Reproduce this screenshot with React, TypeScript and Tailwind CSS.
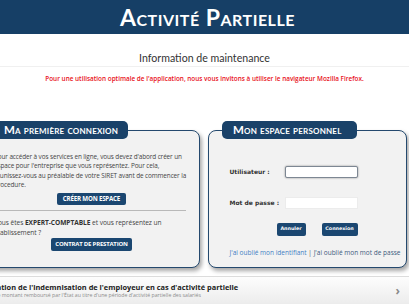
export default function App() {
  return (
    <div className="w-[409px] h-[307px] overflow-hidden bg-white font-['Open_Sans',sans-serif] text-[#333]">
      <div className="h-[34px] bg-[#163f66] flex items-center justify-center">
        <h1 className="pl-[6px] text-white font-bold text-[23px] leading-none [font-variant:small-caps] font-['Lato',sans-serif] tracking-[0.5px]">
          Activité Partielle
        </h1>
      </div>

      <div className="pt-[16px] text-center">
        <h2 className="text-[10.6px] leading-[16px] text-[#333] font-['Lato',sans-serif]">Information de maintenance</h2>
        <div className="h-px bg-[#f0f0f0]" />
        <p className="mt-[7px] text-[6.4px] leading-[10px] text-[#e8101a] font-semibold">
          Pour une utilisation optimale de l'application, nous vous invitons à utiliser le navigateur Mozilla Firefox.
        </p>
      </div>

      <div className="mt-[37px] flex gap-[8px]">
        {/* Left panel */}
        <div className="ml-[-20px] w-[220px] shrink-0 flex flex-col">
          <div className="ml-[14px] self-start relative z-10 -mb-[9px] h-[18px] px-[10px] flex items-center rounded-[5px] bg-[#1a4269] text-white font-bold text-[11.5px] leading-none [font-variant:small-caps] font-['Lato',sans-serif] tracking-[0.2px]">
            Ma première connexion
          </div>
          <div className="h-[138px] border-[1.5px] border-[#24496e] rounded-[8px] bg-[#f2f2f2] shadow-[2px_3px_4px_rgba(0,0,0,0.35)] pl-[13px] pr-[10px] pt-[21px]">
            <p className="text-[6.4px] leading-[9.4px] tracking-[-0.1px] text-[#444]">
              Pour accéder à vos services en ligne, vous devez d'abord créer un espace pour l'entreprise que vous représentez. Pour cela, munissez-vous au préalable de votre SIRET avant de commencer la procedure.
            </p>
            <div className="mt-[3px] flex justify-center">
              <button className="h-[12px] px-[6px] rounded-[2px] bg-[#1b4771] text-white text-[6.2px] font-bold uppercase leading-none tracking-[-0.2px]">
                Créer mon espace
              </button>
            </div>
            <div className="mt-[5px] mr-[3px] h-px bg-[#b9b9b9]" />
            <p className="mt-[7px] text-[6.6px] leading-[10px] tracking-[-0.05px] text-[#444]">
              Vous êtes <span className="font-bold text-[#333]">EXPERT-COMPTABLE</span> et vous représentez un établissement ?
            </p>
            <div className="flex justify-center">
              <button className="h-[13px] px-[4px] rounded-[2px] bg-[#1b4771] text-white text-[6px] font-bold uppercase leading-none tracking-[-0.2px]">
                Contrat de prestation
              </button>
            </div>
          </div>
        </div>

        {/* Right panel */}
        <div className="w-[199px] shrink-0 flex flex-col">
          <div className="ml-[14px] self-start relative z-10 -mb-[9px] h-[18px] pl-[11px] pr-[15px] flex items-center rounded-[5px] bg-[#1a4269] text-white font-bold text-[11.5px] leading-none [font-variant:small-caps] font-['Lato',sans-serif] tracking-[0.2px]">
            Mon espace personnel
          </div>
          <div className="h-[138px] border-[1.5px] border-[#24496e] rounded-[8px] bg-[#f2f2f2] shadow-[2px_3px_4px_rgba(0,0,0,0.35)] pl-[20.5px] pt-[34.5px]">
            <div className="flex items-center">
              <span className="w-[55px] text-[6px] font-bold text-[#333] font-['DejaVu_Sans',sans-serif]">Utilisateur :</span>
              <div className="w-[73px] h-[12px] bg-white border border-[#7d8793] rounded-[2px] shadow-[0_0_2px_rgba(0,0,0,0.45)]" />
            </div>
            <div className="mt-[19px] flex items-center">
              <span className="w-[55px] text-[6px] font-bold text-[#333] font-['DejaVu_Sans',sans-serif]">Mot de passe :</span>
              <div className="w-[73px] h-[12px] bg-white border border-[#ececec]" />
            </div>
            <div className="mt-[14px] ml-[47px] flex gap-[16px]">
              <button className="w-[29px] h-[13px] rounded-[2px] bg-[#1b4771] text-white text-[4.8px] font-bold leading-none font-['DejaVu_Sans',sans-serif]">Annuler</button>
              <button className="w-[36px] h-[13px] rounded-[2px] bg-[#1b4771] text-white text-[4.8px] font-bold leading-none font-['DejaVu_Sans',sans-serif]">Connexion</button>
            </div>
            <p className="mt-[12px] text-[6.5px] leading-[10px] whitespace-nowrap">
              <span className="text-[#3f7fc4]">J'ai oublié mon identifiant</span>
              <span className="text-[#555]"> | </span>
              <span className="text-[#3d5b7d]">J'ai oublié mon mot de passe</span>
            </p>
          </div>
        </div>
      </div>

      <div className="mt-[8px] h-[28px] border-t border-[#dcdcdc] bg-gradient-to-b from-[#fdfdfd] to-[#ececec] flex items-center justify-between pr-[9px]">
        <div className="ml-[-24px] whitespace-nowrap">
          <div className="text-[7.4px] leading-[10px] font-bold text-[#222]">Simulation de l'indemnisation de l'employeur en cas d'activité partielle</div>
          <div className="text-[5.2px] leading-[7px] text-[#8c8c8c]">Simulez le montant remboursé par l'État au titre d'une période d'activité partielle des salariés</div>
        </div>
        <span className="text-[12px] font-bold text-[#8a8a8a] leading-none">›</span>
      </div>
    </div>
  );
}
